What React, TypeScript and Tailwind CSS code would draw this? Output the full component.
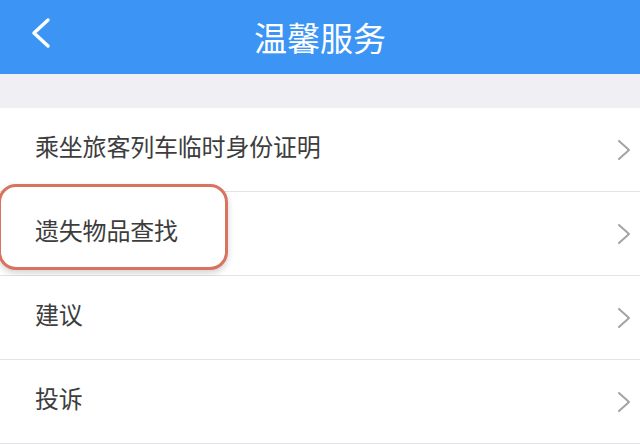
import React from "react";

const Chevron = () => (
  <svg width="14" height="22" viewBox="0 0 14 22" className="shrink-0">
    <path d="M2 2 L12 11 L2 20" fill="none" stroke="#a3a3a3" strokeWidth="2" strokeLinecap="round" strokeLinejoin="round" />
  </svg>
);

const Row = ({ label, highlight }: { label: string; highlight?: boolean }) => (
  <div className="relative flex h-[84px] items-center justify-between border-b border-[#e4e4e8] bg-white pl-[35px] pr-[9px]">
    {highlight && (
      <div className="absolute left-[-2px] top-[-8px] h-[86px] w-[230px] rounded-[18px] border-[3px] border-[#d9725e] bg-white shadow-[0_3px_6px_rgba(0,0,0,0.18)]" />
    )}
    <span className="relative mb-[8px] text-[24px] leading-none tracking-[-0.2px] text-[#3d3d3d]">{label}</span>
    <Chevron />
  </div>
);

export default function App() {
  return (
    <div
      className="h-[444px] w-[640px] overflow-hidden bg-white"
      style={{ fontFamily: '"Noto Sans CJK SC", "Noto Sans", sans-serif' }}
    >
      <div className="relative flex h-[74px] items-center justify-center bg-[#3c95f5]">
        <svg width="22" height="32" viewBox="0 0 22 32" className="absolute left-[30px] top-[17px]">
          <path d="M18 3 L4 16 L18 29" fill="none" stroke="#ffffff" strokeWidth="3.5" strokeLinecap="round" strokeLinejoin="round" />
        </svg>
        <span className="text-[33px] leading-none text-white">温馨服务</span>
      </div>
      <div className="h-[34px] bg-[#efeff4]" />
      <Row label="乘坐旅客列车临时身份证明" />
      <Row label="遗失物品查找" highlight />
      <Row label="建议" />
      <Row label="投诉" />
    </div>
  );
}
